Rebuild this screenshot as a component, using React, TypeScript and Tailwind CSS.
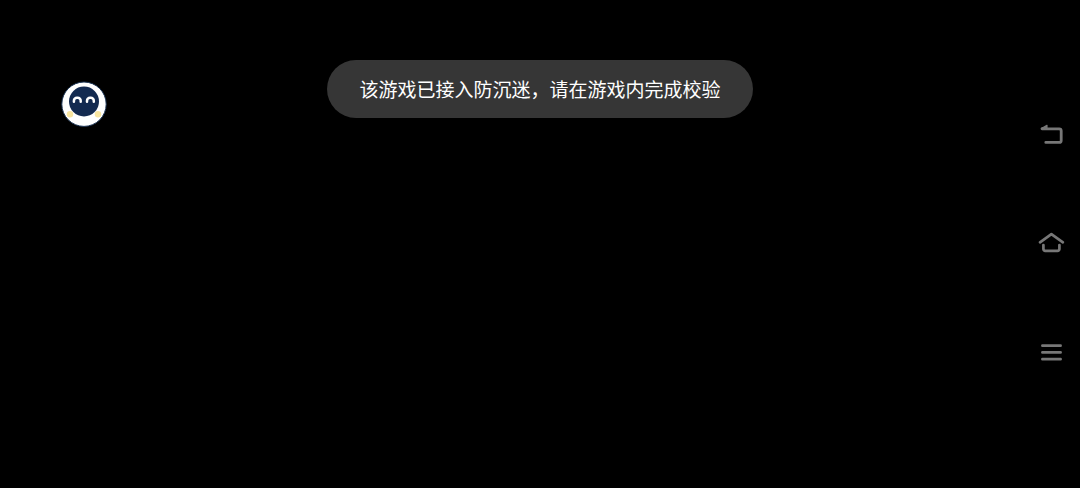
const toastText = "该游戏已接入防沉迷，请在游戏内完成校验";

export default function App() {
  return (
    <main className="flex h-[488px] w-[1080px] items-start justify-between overflow-hidden bg-black">
      <button type="button" aria-label="助手" className="mt-[81px] ml-[61px] mr-[220px] shrink-0">
        <PenguinIcon />
      </button>

      <Toast message={toastText} />

      <nav className="mt-[118px] mr-3 ml-auto flex shrink-0 flex-col text-[#777777]">
        <button type="button" aria-label="返回">
          <BackIcon />
        </button>
        <button type="button" aria-label="主页" className="mt-[76px]">
          <HomeIcon />
        </button>
        <button type="button" aria-label="菜单" className="mt-[78px]">
          <MenuIcon />
        </button>
      </nav>
    </main>
  );
}

function Toast({ message }: { message: string }) {
  return (
    <div
      role="status"
      className="mt-[59.5px] flex h-[58.5px] w-[426px] shrink-0 items-center justify-center rounded-full bg-[#363636]"
    >
      <p className="font-['Noto_Sans_CJK_SC',sans-serif] text-[19px] leading-7 whitespace-nowrap text-white">
        {message}
      </p>
    </div>
  );
}

function PenguinIcon() {
  return (
    <svg viewBox="0 0 46 46" className="block h-[46px] w-[46px]" fill="none">
      <circle cx="23" cy="23.2" r="22.2" fill="#fff" stroke="#183152" strokeWidth="1" />
      <circle cx="9" cy="33.3" r="3.2" fill="#f8e5a0" />
      <circle cx="37" cy="33.3" r="3.2" fill="#f8e5a0" />
      <circle cx="23" cy="20.5" r="15" fill="#132a50" />
      <path
        d="M12.9 20.8v-1a3 3 0 0 1 3-3h.8a3 3 0 0 1 3 3v1M26 20.8v-1a3 3 0 0 1 3-3h.8a3 3 0 0 1 3 3v1"
        stroke="#fff"
        strokeWidth="2.5"
        strokeLinecap="round"
      />
    </svg>
  );
}

function BackIcon() {
  return (
    <svg viewBox="0 0 32 32" className="block h-8 w-8" fill="none" stroke="currentColor">
      <path
        d="M6 10.8h17.2a2 2 0 0 1 2 2v9.6a2 2 0 0 1-2 2H9.8"
        strokeWidth="2.8"
        strokeLinecap="round"
      />
      <path d="M5.4 10.4 11 7.3v3.5z" fill="currentColor" strokeWidth="1.2" strokeLinejoin="round" />
    </svg>
  );
}

function HomeIcon() {
  return (
    <svg
      viewBox="0 0 32 32"
      className="block h-8 w-8"
      fill="none"
      stroke="currentColor"
      strokeWidth="2.7"
      strokeLinecap="round"
      strokeLinejoin="round"
    >
      <path d="M4 16.3 15.4 8.2 26.9 16.3" />
      <path d="M7.4 19v4a1.8 1.8 0 0 0 1.8 1.8h12.4a1.8 1.8 0 0 0 1.8-1.8v-4" />
    </svg>
  );
}

function MenuIcon() {
  return (
    <svg
      viewBox="0 0 32 32"
      className="block h-8 w-8"
      stroke="currentColor"
      strokeWidth="2.7"
      strokeLinecap="round"
    >
      <path d="M6.4 9.7h18.2M6.4 16.4h18.2M6.4 23.2h18.2" />
    </svg>
  );
}
